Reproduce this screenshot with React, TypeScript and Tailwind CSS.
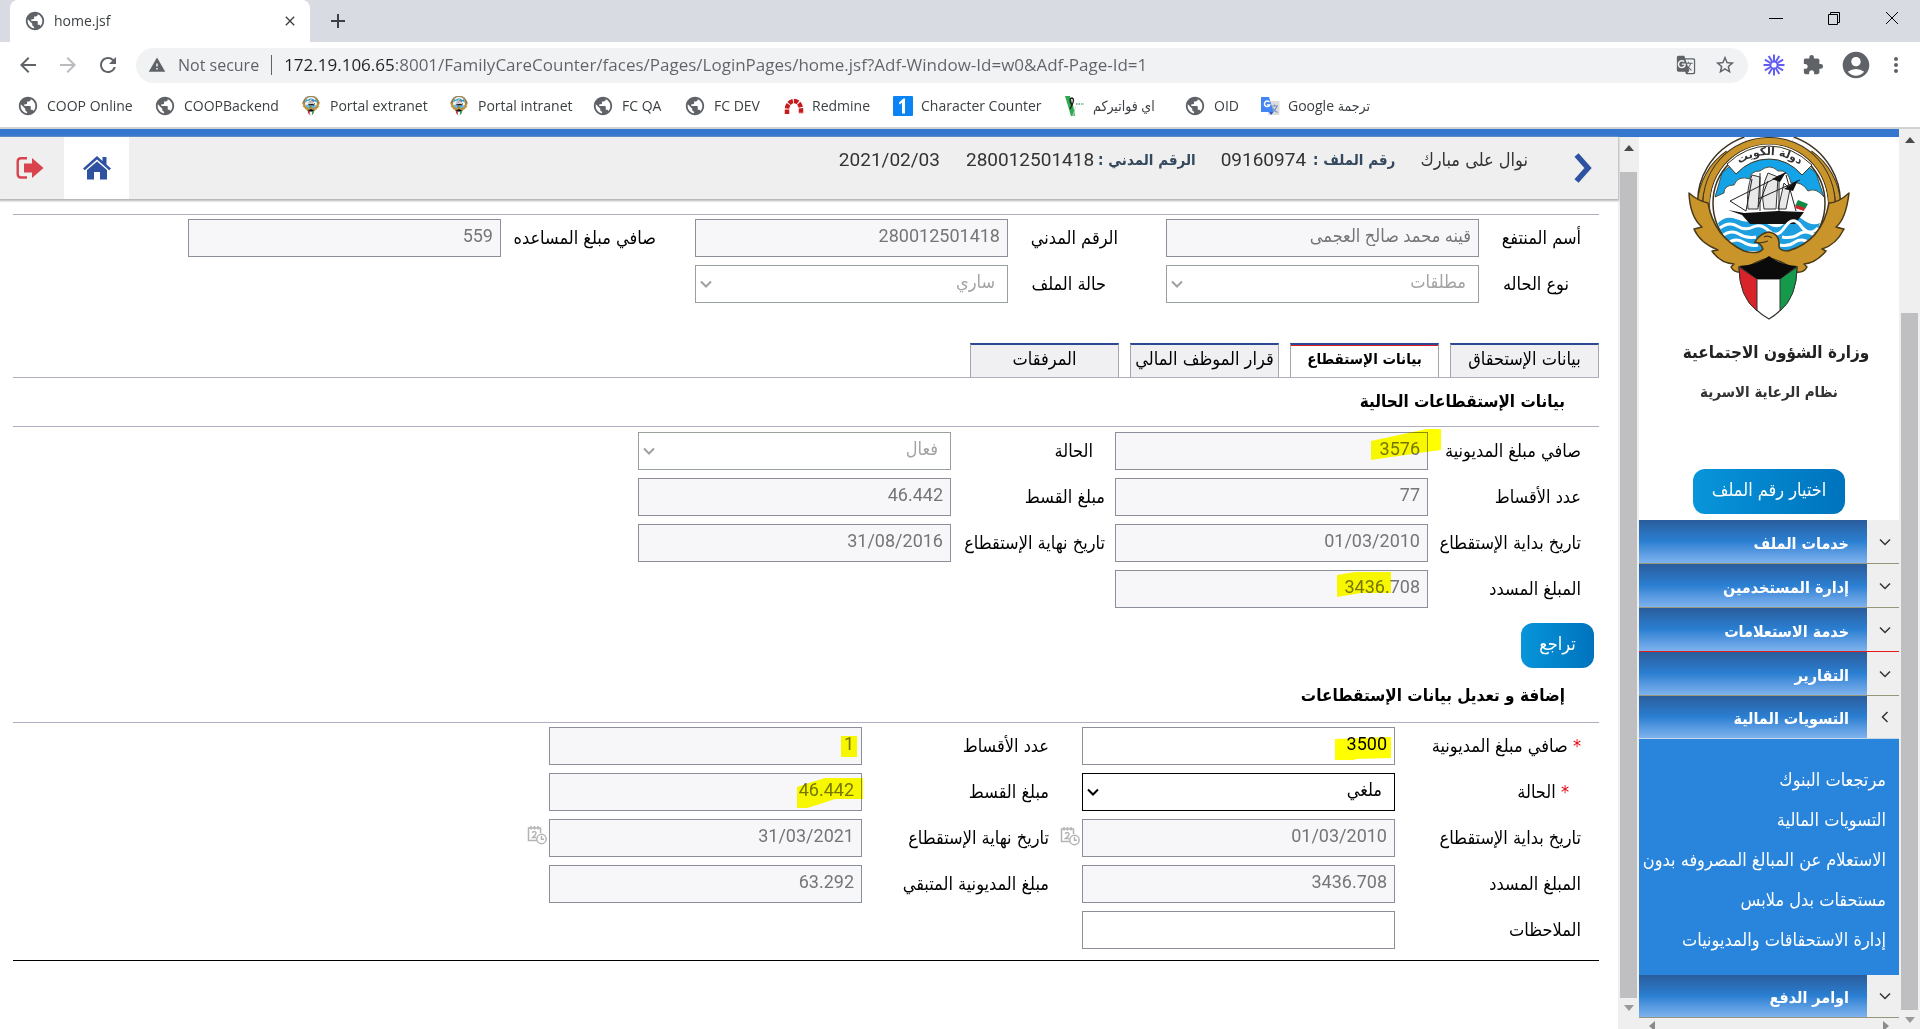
import React from "react";
import {
  MdPublic, MdArrowBack, MdArrowForward, MdRefresh, MdWarning, MdStarBorder,
  MdExtension, MdAccountCircle, MdMoreVert, MdGTranslate, MdClose, MdAdd,
} from "react-icons/md";

const ARABIC = "font-['DejaVu_Sans_Condensed','DejaVu_Sans',sans-serif]";
const DIGITS = "font-['Roboto','DejaVu_Sans_Condensed','DejaVu_Sans',sans-serif]";
const CHROME = "font-['Open_Sans','DejaVu_Sans_Condensed','DejaVu_Sans',sans-serif]";

/* ---------- drawings ---------- */

function Emblem({ className, detailed = true }: { className: string; detailed?: boolean }) {
  return (
    <svg viewBox="0 0 162 184" className={className} role="img" aria-label="شعار دولة الكويت">
      <g fill="none" strokeLinecap="butt">
        <path d="M16 76A66 64 0 0 1 58 5M146 76A66 64 0 0 0 104 5" stroke="#3d3320" strokeWidth="12" />
        <path d="M16 76A66 64 0 0 1 58 5M146 76A66 64 0 0 0 104 5" stroke="#fff" strokeWidth="9" />
        <path d="M12 66A68 66 0 0 1 40 16M150 66A68 66 0 0 0 122 16" stroke="#3d3320" strokeWidth="6" />
        <path d="M12 66A68 66 0 0 1 40 16M150 66A68 66 0 0 0 122 16" stroke="#c9952b" strokeWidth="4" />
        <path d="M19 76A62 63 0 0 1 81 4A62 63 0 0 1 143 76" stroke="#3d3320" strokeWidth="8" />
        <path d="M19 76A62 63 0 0 1 81 4A62 63 0 0 1 143 76" stroke="#c9952b" strokeWidth="6" />
        <path d="M24 76A57 61 0 0 1 81 9A57 61 0 0 1 138 76" stroke="#fff" strokeWidth="3" />
      </g>
      <circle cx="81" cy="66" r="56" fill="#fff" stroke="#3d3320" strokeWidth="1.5" />
      <path d="M34 36Q56 14 81 14Q106 14 128 36L136 60Q128 50 120 54Q114 44 103 46Q100 32 90 34Q82 26 72 34Q62 34 62 42Q50 38 46 48Q36 48 36 56L27 60Z" fill="#13a3e6" stroke="#3d3320" strokeWidth="0.800" />
      <path d="M39 27Q58 9 81 9Q104 9 124 28L114 38Q100 22 81 22Q62 22 48 37Z" fill="#fff" stroke="#3d3320" strokeWidth="1" />
      {detailed && (
        <g>
          <path id="emblem-arc" d="M44 33Q60 18 81 18Q102 18 119 34" fill="none" />
          <text className="font-['DejaVu_Sans',sans-serif] font-bold" fontSize="11" fill="#333" textAnchor="middle" direction="rtl">
            <textPath href="#emblem-arc" startOffset="50%">دولة الكويت</textPath>
          </text>
        </g>
      )}
      <path d="M64 38Q58 52 60 72H70L72 40ZM80 36Q72 52 76 72H88L90 40ZM96 46L90 72H98L102 52Z" fill="#e8e8e8" stroke="#333" strokeWidth="1" />
      <path d="M42 64L98 36M70 62L112 43M42 64L58 74M72 36V74M91 38V74M64 42L58 74M98 38L108 74M80 44L70 70" fill="none" stroke="#222" strokeWidth="1" />
      <path d="M84 42L98 35L92 45ZM96 52L110 43L105 54Z" fill="#111" />
      <path d="M110 63L120 67L117 72L107 69Z" fill="#118a48" />
      <path d="M108 68L117 71L116 74L107 71Z" fill="#d8232a" />
      <path d="M30 86Q38 78 48 82T64 84T81 88T98 84T114 82T132 86Q126 106 108 114H54Q36 106 30 86Z" fill="#1e9fe0" />
      <path d="M40 73L56 76L90 74L116 75L107 87H62L54 78Z" fill="#111" />
      <g fill="none" stroke="#fff" strokeWidth="3">
        <path d="M32 91Q41 84 49 89T65 90T81 94T97 90T113 89T130 91" />
        <path d="M34 99Q43 92 51 97T68 100M94 100Q104 102 111 97T128 99" />
        <path d="M39 107Q47 100 55 105T70 108M92 108Q100 110 107 105T123 107" />
      </g>
      <path d="M1 56Q10 64 20 66Q26 100 56 114Q70 118 75 112Q73 106 67 105Q72 96 81 95Q92 97 91 108Q90 114 100 114Q134 104 141 66Q150 66 161 56Q158 82 148 90Q155 92 156 92Q148 108 134 112L138 114Q128 126 116 127L119 130Q116 136 108 135Q96 124 81 121Q66 124 54 135Q46 136 43 130L46 127Q32 126 24 114L30 113Q12 106 6 92L14 90Q2 80 1 56Z" fill="#c9952b" stroke="#4a3a17" strokeWidth="1.5" strokeLinejoin="round" />
      <path d="M66 105Q72 107 80 104M76 100Q80 98 84 101" fill="none" stroke="#4a3a17" strokeWidth="1.2" />
      <path d="M51 130Q52 166 81 182Q108 166 109 130L91 142H70Z" fill="#fff" stroke="#333" strokeWidth="1.2" />
      <path d="M51 130Q51 160 69 174V142Z" fill="#d8232a" stroke="#333" strokeWidth="1" />
      <path d="M109 130Q109 160 92 174V142Z" fill="#159a4c" stroke="#333" strokeWidth="1" />
      <path d="M51 129Q70 128 81 119Q92 128 109 129L92 142H69Z" fill="#0a0a0a" />
    </svg>
  );
}

function LogoutIcon() {
  return (
    <svg viewBox="0 0 28 24" className="h-6 w-7">
      <path d="M11 2.200H5Q1.700 2.200 1.700 5.500V18Q1.700 21.500 5 21.500H11" fill="none" stroke="#d9434e" strokeWidth="2.400" />
      <path d="M8 7.500H16V2L27.500 12L16 22V16.500H8Z" fill="#d9434e" />
    </svg>
  );
}

function HomeIcon() {
  return (
    <svg viewBox="0 0 28 24" className="h-6 w-7" fill="#2f52a0">
      <path d="M14 0L0 12.500L1.800 14.200L14 3.600L26.200 14.200L28 12.500L23.500 8.400V1H19.500V4.900Z" />
      <path d="M14 5.400L4 14V23.500H11V16H17V23.500H24V14Z" />
    </svg>
  );
}

function CalendarIcon() {
  return (
    <svg viewBox="0 0 20 20" className="h-5 w-5" fill="none" stroke="#b4b4b4" strokeWidth="1.500">
      <path d="M10 15.500H1.500V3H13.500V8M4 1V4.500M7.500 1V4.500M11 1V4.500" />
      <path d="M5 7.500Q9 5.500 9 8Q9 9.500 5.500 12.500H9" />
      <circle cx="14.500" cy="14" r="4.700" fill="#fff" />
      <path d="M14.500 11V14.300H17" />
    </svg>
  );
}

function Burst() {
  return (
    <svg viewBox="0 0 24 24" className="h-6 w-6" stroke="#625df5" strokeWidth="2" fill="none">
      <circle cx="12" cy="12" r="3.600" />
      <path d="M12 1.500V8M12 16V22.500M1.500 12H8M16 12H22.500M6.700 2.900L10 8.500M14 15.500L17.300 21.100M2.900 6.700L8.500 10M15.500 14L21.100 17.300M17.300 2.900L14 8.500M10 15.500L6.700 21.100M21.100 6.700L15.500 10M8.500 14L2.900 17.300" />
    </svg>
  );
}

function RedmineIcon() {
  return (
    <svg viewBox="0 0 20 20" className="h-5 w-5">
      <path d="M3 18V13.500A7 8.500 0 0 1 17 13.500V18" fill="none" stroke="#c61a1b" strokeWidth="4.500" strokeDasharray="4.500 1" />
    </svg>
  );
}

function TranslateLogo() {
  return (
    <svg viewBox="0 0 20 20" className="h-5 w-5">
      <rect x="8" y="5" width="11.500" height="14" rx="1" fill="#dcdcdc" />
      <path d="M11 10H18M14.500 8.500V10M17 10Q15.500 14.500 11.500 16M12.500 11.500Q14 15 17.500 16.500" fill="none" stroke="#7b93b5" strokeWidth="1.200" />
      <path d="M1 1H9L13.500 16H1Z" fill="#4285f4" />
      <path d="M9.500 6.200A2.800 2.800 0 1 0 9.800 9H7" fill="none" stroke="#fff" strokeWidth="1.400" />
      <path d="M9 16H13.500L11 19Z" fill="#2a56c6" />
    </svg>
  );
}

function InvoiceIcon() {
  return (
    <svg viewBox="0 0 20 20" className="h-5 w-5">
      <path d="M0 0H5L8 9L10 20H6Z" fill="#2fa84f" />
      <path d="M7 9Q3 3 7 2Q10 3 7 9L5 13" fill="none" stroke="#222" strokeWidth="1.400" />
      <path d="M11 9L9 20H7Z" fill="#8bcf9c" />
      <path d="M11 8H19" stroke="#7fbf92" strokeWidth="2" strokeDasharray="1.500 1" />
    </svg>
  );
}

function OneIcon() {
  return (
    <svg viewBox="0 0 20 20" className="h-5 w-5">
      <rect width="20" height="20" rx="1" fill="#0b84f3" />
      <path d="M6 6.500L10.500 2.500H12V17.500H9V6.800L6.500 8.500Z" fill="#fff" />
    </svg>
  );
}

const Chevron = ({ className }: { className: string }) => (
  <svg viewBox="0 0 12 8" className={className} fill="none" stroke="currentColor">
    <path d="M1 1.500L6 6.500L11 1.500" />
  </svg>
);

const Tri = ({ className }: { className: string }) => (
  <svg viewBox="0 0 10 6" className={className} fill="currentColor"><path d="M5 0L10 6H0Z" /></svg>
);

/* ---------- browser ---------- */

const globe = <MdPublic className="h-[22px] w-[22px] text-[#5f6368]" />;
const crest = <Emblem className="h-5 w-[22px]" detailed={false} />;

const bookmarks: { label: string; icon: React.ReactNode; width: string }[] = [
  { label: "COOP Online", icon: globe, width: "w-[137px]" },
  { label: "COOPBackend", icon: globe, width: "w-[146px]" },
  { label: "Portal extranet", icon: crest, width: "w-[148px]" },
  { label: "Portal intranet", icon: crest, width: "w-[144px]" },
  { label: "FC QA", icon: globe, width: "w-[92px]" },
  { label: "FC DEV", icon: globe, width: "w-[100px]" },
  { label: "Redmine", icon: <RedmineIcon />, width: "w-[109px]" },
  { label: "Character Counter", icon: <OneIcon />, width: "w-[172px]" },
  { label: "اي فواتيركم", icon: <InvoiceIcon />, width: "w-[119px]" },
  { label: "OID", icon: globe, width: "w-[76px]" },
  { label: "Google ترجمة", icon: <TranslateLogo />, width: "w-[120px]" },
];

function Browser() {
  return (
    <header className={`${CHROME} shrink-0`}>
      <div className="flex h-[42px] items-end bg-[#d8dbe1] pl-[10px]">
        <div className="flex h-[42px] w-[300px] items-center rounded-t-lg bg-white pl-[14px] pr-[12px]">
          {globe}
          <span className="ml-2 flex-1 text-sm text-[#3c4043]">home.jsf</span>
          <button aria-label="Close tab" className="text-[#3c4043]"><MdClose className="h-4 w-4" /></button>
        </div>
        <button aria-label="New tab" className="mb-[9px] ml-4 text-[#3c4043]"><MdAdd className="h-6 w-6" /></button>
        <div className="ml-auto flex h-full items-start gap-[42px] pr-5 pt-[10px]">
          <button aria-label="Minimize"><svg viewBox="0 0 16 16" className="h-4 w-4"><path d="M1 8.500H15" stroke="#000" /></svg></button>
          <button aria-label="Restore"><svg viewBox="0 0 16 16" className="h-4 w-4" fill="none" stroke="#000"><path d="M2.500 4.500H11.500V14.500H2.500ZM4.500 4.500V2.500H13.500V12.500H11.500" /></svg></button>
          <button aria-label="Close"><svg viewBox="0 0 16 16" className="h-4 w-4"><path d="M2 2L14 14M14 2L2 14" stroke="#000" /></svg></button>
        </div>
      </div>
      <div className="flex h-[42px] items-center bg-white pt-1 pl-4 text-[#5f6368]">
        <button aria-label="Back"><MdArrowBack className="h-6 w-6" /></button>
        <button aria-label="Forward" className="ml-4 text-[#b9bbbe]"><MdArrowForward className="h-6 w-6" /></button>
        <button aria-label="Reload" className="ml-4"><MdRefresh className="h-6 w-6" /></button>
        <div className="ml-4 flex h-[35px] flex-1 items-center rounded-full bg-[#f1f2f4] pl-3 pr-3">
          <MdWarning className="h-[18px] w-[18px]" />
          <span className="ml-3 text-base whitespace-nowrap">Not secure</span>
          <span className="mx-3 h-5 w-px bg-[#5f6368]" />
          <input
            aria-label="Address"
            className="min-w-0 flex-1 bg-[linear-gradient(90deg,#202124_110px,#5f6368_110px)] bg-clip-text text-[17px] leading-6 text-transparent"
            defaultValue="172.19.106.65:8001/FamilyCareCounter/faces/Pages/LoginPages/home.jsf?Adf-Window-Id=w0&Adf-Page-Id=1"
          />
          <button aria-label="Translate"><MdGTranslate className="h-5 w-5" /></button>
          <button aria-label="Bookmark" className="ml-[18px]"><MdStarBorder className="h-[22px] w-[22px]" /></button>
        </div>
        <div className="flex items-center gap-3 pl-[14px] pr-2">
          <Burst />
          <MdExtension className="mx-1 h-[22px] w-[22px]" />
          <MdAccountCircle className="h-8 w-8" />
          <MdMoreVert className="mr-1 h-6 w-6" />
        </div>
      </div>
      <nav className="flex h-[43px] items-center bg-white pl-[17px]">
        {bookmarks.map((b) => (
          <a key={b.label} href="#" className={`flex items-center gap-2 whitespace-nowrap text-sm text-[#3c4043] ${b.width}`}>
            {b.icon}
            <span>{b.label}</span>
          </a>
        ))}
      </nav>
      <div className="h-[2px] bg-[#d0d3d6]" />
    </header>
  );
}

/* ---------- form ---------- */

type MarkShape = { points: string; w: string };

function Mark({ shape }: { shape: MarkShape }) {
  return (
    <svg viewBox="0 0 80 38" className={`pointer-events-none absolute top-0 h-[38px] w-[80px] overflow-visible mix-blend-multiply ${shape.w}`} aria-hidden="true">
      <polygon points={shape.points} fill="#ffff00" />
    </svg>
  );
}

function Field({ id, label, value, lw, kind = "off", required, mark, inset = "" }: {
  id: string; label: string; value: string; lw: string;
  kind?: "off" | "on" | "select-off" | "select-on"; required?: boolean; mark?: MarkShape; inset?: string;
}) {
  const select = kind.startsWith("select");
  return (
    <div className="flex h-[46px] items-start">
      <label htmlFor={id} className={`shrink-0 pt-2 text-lg leading-[22px] whitespace-nowrap text-black ${lw} ${inset}`}>
        {required && <span className="text-red-600">* </span>}
        {label}
      </label>
      <div className="relative w-[313px] shrink-0">
        {select ? (
          <>
            <select id={id} disabled={kind === "select-off"} className={`h-[38px] w-full appearance-none rounded-none border bg-white pr-3 pb-1 pl-8 text-lg opacity-100 ${kind === "select-on" ? "border-black text-black" : "border-[#98a298] text-[#a3a3a3]"}`}>
              <option>{value}</option>
            </select>
            <Chevron className={`pointer-events-none absolute top-[15px] left-[5px] h-2 w-3 stroke-2 ${kind === "select-on" ? "text-black" : "text-[#a0a0a0]"}`} />
          </>
        ) : (
          <input id={id} disabled={kind === "off"} defaultValue={value} dir="auto" className={`${DIGITS} h-[38px] w-full border border-[#8b8f99] px-[7px] pb-[6px] text-right text-lg ${kind === "on" ? "bg-white text-black" : "bg-[#f7f7f9] text-[#757575]"}`} />
        )}
        {mark && <Mark shape={mark} />}
      </div>
    </div>
  );
}

const tabs = [
  { label: "بيانات الإستحقاق", active: false },
  { label: "بيانات الإستقطاع", active: true },
  { label: "قرار الموظف المالي", active: false },
  { label: "المرفقات", active: false },
];

const actionButton = "rounded-xl bg-linear-to-r from-[#0895da] to-[#0073bd] pb-1 text-lg text-white";

function MainPanel() {
  return (
    <main className="flex min-w-0 flex-1 flex-col bg-white">
      <div className="flex h-[62px] shrink-0 items-start bg-[#efeff0] shadow-[0_1px_2px_1px_#b5b5b5]" dir="ltr">
        <button aria-label="تسجيل الخروج" className="flex h-full w-[64px] items-center justify-start pl-4"><LogoutIcon /></button>
        <button aria-label="الرئيسية" className="flex h-full w-[65px] items-center justify-center bg-white"><HomeIcon /></button>
        <div className="ml-auto flex h-[46px] items-center text-[#333]" dir="rtl">
          <span className="text-lg">نوال على مبارك</span>
          <span className="mr-[25px] text-[15px] font-bold text-[#34495e]">رقم الملف :</span>
          <span className={`${DIGITS} mr-[7px] text-[19px]`}>09160974</span>
          <span className="mr-[25px] text-[15px] font-bold text-[#34495e]">الرقم المدني :</span>
          <span className={`${DIGITS} mr-1 text-[19px]`}>280012501418</span>
          <span className={`${DIGITS} mr-[26px] text-[19px]`} dir="ltr">2021/02/03</span>
        </div>
        <button aria-label="التالي" className="mr-[26px] ml-[46px] flex h-full items-center">
          <svg viewBox="0 0 18 30" className="h-[30px] w-[18px]"><path d="M2.500 2L14 15L2.500 28" fill="none" stroke="#2f52a0" strokeWidth="5.500" /></svg>
        </button>
      </div>

      <div className="mr-[19px] ml-[13px] pt-[15px]">
        <section className="flex gap-0 border-t border-[#b0aebf] pt-1 pr-[18px]">
          <div>
            <Field id="name" label="أسم المنتفع" value="قينه محمد صالح العجمى" lw="w-[102px]" />
            <Field id="case" label="نوع الحاله" value="مطلقات" lw="w-[102px]" kind="select-off" inset="pr-3" />
          </div>
          <div className="mr-12">
            <Field id="civil" label="الرقم المدني" value="280012501418" lw="w-[110px]" />
            <Field id="status" label="حالة الملف" value="ساري" lw="w-[110px]" kind="select-off" inset="pr-3" />
          </div>
          <div className="mr-[39px]">
            <Field id="net" label="صافي مبلغ المساعده" value="559" lw="w-[155px]" />
          </div>
        </section>

        <div role="tablist" className="mt-8 flex h-[35px] gap-[11px] border-b border-[#b0aebf]">
          {tabs.map((t) => (
            <button key={t.label} role="tab" aria-selected={t.active}
              className={`w-[149px] border-x border-t-2 border-x-[#a5a5ad] border-t-[#2b4a96] pb-1 whitespace-nowrap text-black ${t.active ? "bg-white text-[15px] font-bold shadow-[inset_0_1px_0_#e02020]" : "bg-[#f0f0f2] text-lg"}`}>
              {t.label}
            </button>
          ))}
        </div>

        <h2 className="h-[48px] pr-[34px] text-[17px] leading-[46px] font-bold">بيانات الإستقطاعات الحالية</h2>
        <section className="flex border-t border-[#b0aebf] pt-[5px] pr-[18px]">
          <div>
            <Field id="debt" label="صافي مبلغ المديونية" value="3576" lw="w-[153px]" mark={{ points: "0,9 56,-3 70,-3 70,18 55,20 0,28", w: "left-[256px]" }} />
            <Field id="count" label="عدد الأقساط" value="77" lw="w-[153px]" />
            <Field id="start" label="تاريخ بداية الإستقطاع" value="01/03/2010" lw="w-[153px]" />
            <Field id="paid" label="المبلغ المسدد" value="3436.708" lw="w-[153px]" mark={{ points: "0,5 18,2 54,2 54,23 24,23 0,27", w: "left-[222px]" }} />
          </div>
          <div className="mr-[10px]">
            <Field id="state" label="الحالة" value="فعال" lw="w-[154px]" kind="select-off" inset="pr-3" />
            <Field id="instalment" label="مبلغ القسط" value="46.442" lw="w-[154px]" />
            <Field id="end" label="تاريخ نهاية الإستقطاع" value="31/08/2016" lw="w-[154px]" />
          </div>
        </section>
        <button className={`${actionButton} mt-[7px] mr-[5px] h-[45px] w-[73px]`}>تراجع</button>

        <h2 className="h-[54px] pr-[34px] text-[17px] leading-[54px] font-bold">إضافة و تعديل بيانات الإستقطاعات</h2>
        <section className="flex border-t border-[#b0aebf] pt-1 pr-[18px]">
          <div>
            <Field id="debt2" label="صافي مبلغ المديونية" value="3500" lw="w-[186px]" kind="on" required mark={{ points: "0,12 56,10 56,31 20,32 20,33 0,33", w: "left-[253px]" }} />
            <Field id="state2" label="الحالة" value="ملغي" lw="w-[186px]" kind="select-on" required inset="pr-3" />
            <Field id="start2" label="تاريخ بداية الإستقطاع" value="01/03/2010" lw="w-[186px]" />
            <Field id="paid2" label="المبلغ المسدد" value="3436.708" lw="w-[186px]" />
            <Field id="notes" label="الملاحظات" value="" lw="w-[186px]" kind="on" />
          </div>
          <div className="flex w-[33px] items-start pt-[99px] pr-[2px]"><CalendarIcon /></div>
          <div>
            <Field id="count2" label="عدد الأقساط" value="1" lw="w-[187px]" mark={{ points: "0,9 16,9 16,30 0,30", w: "left-[292px]" }} />
            <Field id="instalment2" label="مبلغ القسط" value="46.442" lw="w-[187px]" mark={{ points: "0,14 18,8 28,5 66,5 66,26 38,26 20,32 10,35 0,35", w: "left-[248px]" }} />
            <Field id="end2" label="تاريخ نهاية الإستقطاع" value="31/03/2021" lw="w-[187px]" />
            <Field id="left2" label="مبلغ المديونية المتبقي" value="63.292" lw="w-[187px]" />
          </div>
          <div className="flex items-start pt-[98px] pr-[2px]"><CalendarIcon /></div>
        </section>
        <hr className="mt-[3px] border-black" />
      </div>
    </main>
  );
}

function Scrollbar({ top, bottom, lead }: { top: string; bottom: string; lead: string }) {
  return (
    <div aria-hidden="true" className={`flex shrink-0 flex-col items-center bg-[#efeff0] ${lead}`}>
      <div className={`flex shrink-0 justify-center ${top}`}><Tri className="h-[6px] w-[10px] text-[#4a4a4a]" /></div>
      <div className="w-[17px] flex-1 bg-[#bfbec0]" />
      <div className={`flex shrink-0 justify-center ${bottom}`}><Tri className="h-[6px] w-[10px] rotate-180 text-[#9a9a9a]" /></div>
    </div>
  );
}

/* ---------- side menu ---------- */

const menu = [
  { label: "خدمات الملف", line: "border-[#96967c]" },
  { label: "إدارة المستخدمين", line: "border-[#96967c]" },
  { label: "خدمة الاستعلامات", line: "border-[#e51c1c]" },
  { label: "التقارير", line: "border-[#96967c]" },
  { label: "التسويات المالية", line: "border-[#c6d8e8]", open: true },
  { label: "اوامر الدفع", line: "border-[#96967c]" },
];

const submenu = [
  "مرتجعات البنوك",
  "التسويات المالية",
  "الاستعلام عن المبالغ المصروفه بدون",
  "مستحقات بدل ملابس",
  "إدارة الاستحقاقات والمديونيات",
];

function SideMenu() {
  return (
    <aside className="flex w-[260px] shrink-0 flex-col overflow-hidden bg-white">
      <div className="flex h-[383px] shrink-0 flex-col items-center">
        <Emblem className="h-[184px] w-[162px]" />
        <p className="mt-[15px] mr-[-14px] text-[17px] leading-8 font-bold whitespace-nowrap text-[#222]">وزارة الشؤون الاجتماعية</p>
        <p className="mt-2 text-[15px] leading-8 font-bold whitespace-nowrap text-[#333]">نظام الرعاية الاسرية</p>
        <button className={`${actionButton} mt-auto mb-[6px] h-[45px] w-[152px]`}>اختيار رقم الملف</button>
      </div>
      <nav className="flex flex-1 flex-col">
        {menu.map((m) => (
          <div key={m.label} className="shrink-0">
            <button aria-expanded={!!m.open} className={`flex w-full border-b ${m.open || m.label === "اوامر الدفع" ? "h-[43px]" : "h-11"} ${m.line}`}>
              <span className="flex h-full w-8 items-center justify-center bg-[#efeff0] pl-1 text-[#333]">
                <Chevron className={`h-2 w-3 stroke-[1.5] ${m.open ? "rotate-90" : ""}`} />
              </span>
              <span className="flex h-full flex-1 items-center bg-linear-to-b from-[#2a5d9c] via-[#2a7fd2] to-[#7eb3ee] pt-1 pr-[18px] text-base font-bold text-white">{m.label}</span>
            </button>
            {m.open && (
              <div className="flex h-[236px] flex-col bg-[#2984dc] pt-[21px] pr-[13px]">
                {submenu.map((s) => (
                  <a key={s} href="#" className="block h-10 text-lg leading-10 whitespace-nowrap text-white">{s}</a>
                ))}
              </div>
            )}
          </div>
        ))}
        <div aria-hidden="true" className="flex flex-1 items-end justify-between bg-[#efeff0] px-2 text-[#8a8a8a]" dir="ltr">
          <Tri className="h-[6px] w-[10px] -rotate-90" />
          <Tri className="h-[6px] w-[10px] rotate-90" />
        </div>
      </nav>
    </aside>
  );
}

export default function App() {
  return (
    <div className="flex h-screen flex-col overflow-hidden bg-white">
      <Browser />
      <div className={`${ARABIC} flex min-h-0 flex-1`} dir="rtl">
        <Scrollbar top="h-[184px] pt-2" bottom="h-[19px] pt-[7px]" lead="w-[21px]" />
        <div className="flex min-w-0 flex-1 flex-col">
          <div className="h-2 shrink-0 bg-[#3577cf]" />
          <div className="flex min-h-0 flex-1">
            <SideMenu />
            <Scrollbar top="h-[35px] pt-2" bottom="h-[31px] pt-[7px]" lead="w-[21px]" />
            <MainPanel />
          </div>
        </div>
      </div>
    </div>
  );
}
